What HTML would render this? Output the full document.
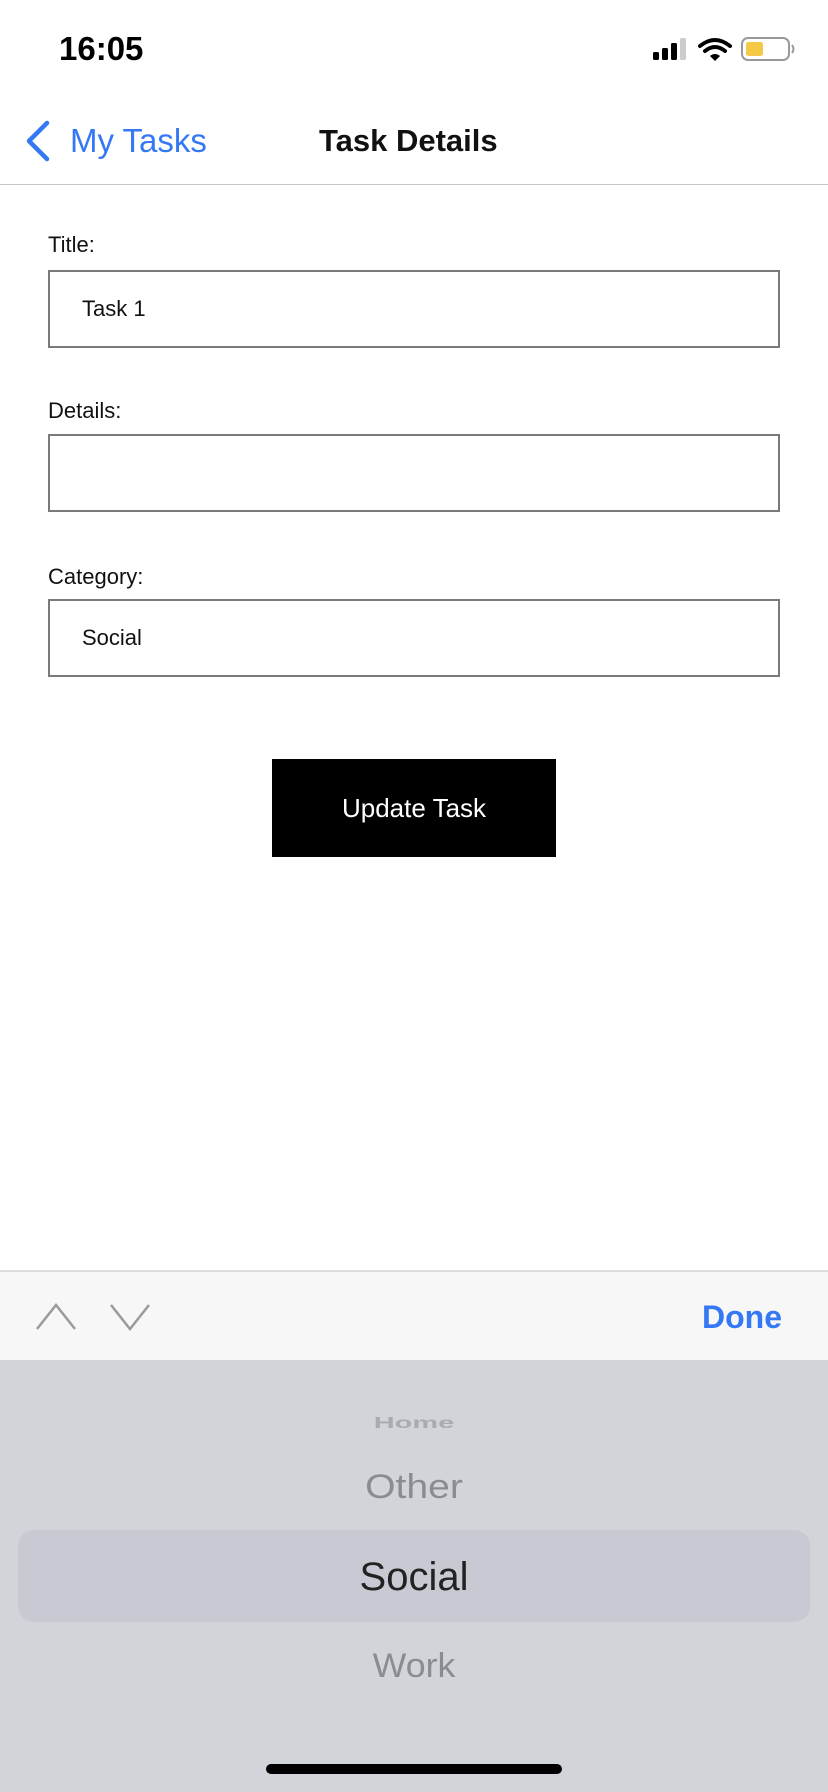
<!DOCTYPE html>
<html><head><meta charset="utf-8"><style>
*{margin:0;padding:0;box-sizing:border-box}
body{width:828px;height:1792px;position:relative;background:#fff;font-family:"Liberation Sans",sans-serif;overflow:hidden}
.a{position:absolute}
.lbl{position:absolute;left:48px;font-size:22px;color:#111;line-height:26px}
.inp{position:absolute;left:48px;width:732px;height:78px;border:2px solid #7a7a7a}
.inp span{position:absolute;left:32px;top:0;line-height:74px;font-size:22px;color:#111}
.pk{position:absolute;left:0;width:828px;text-align:center}
</style></head><body>
<div class="a" style="left:59px;top:29px;font-size:33px;font-weight:bold;line-height:40px;color:#000">16:05</div>
<svg class="a" style="left:650px;top:36px" width="150" height="30" viewBox="0 0 150 30">
<rect x="3" y="16" width="6" height="8" rx="1.5" fill="#000"/>
<rect x="12" y="12" width="6" height="12" rx="1.5" fill="#000"/>
<rect x="21" y="7" width="6" height="17" rx="1.5" fill="#000"/>
<rect x="30" y="2" width="6" height="22" rx="1.5" fill="#ccc"/>
<path d="M50 10 Q65 -2 80 10" stroke="#000" stroke-width="4" fill="none" stroke-linecap="round"/>
<path d="M55 15 Q65 7 75 15" stroke="#000" stroke-width="4" fill="none" stroke-linecap="round"/>
<path d="M60 20 L65 25 L70 20 Q65 16 60 20Z" fill="#000"/>
<rect x="92" y="2" width="47" height="22" rx="6" fill="none" stroke="#999" stroke-width="2"/>
<rect x="96" y="6" width="17" height="14" rx="2.5" fill="#f5c945"/>
<path d="M142 9 Q145 13 142 17" stroke="#999" stroke-width="2" fill="none"/>
</svg>
<svg class="a" style="left:22px;top:120px" width="32" height="42"><path d="M25 3 L7 21 L25 39" stroke="#3478f6" stroke-width="4.5" fill="none" stroke-linecap="round" stroke-linejoin="round"/></svg>
<div class="a" style="left:70px;top:120px;font-size:33px;color:#3478f6;line-height:42px">My Tasks</div>
<div class="a" style="left:319px;top:121px;font-size:31px;font-weight:bold;color:#111;line-height:40px">Task Details</div>
<div class="a" style="left:0;top:184px;width:828px;height:1px;background:#c5c5c5"></div>
<div class="lbl" style="top:232px">Title:</div>
<div class="inp" style="top:270px"><span>Task 1</span></div>
<div class="lbl" style="top:398px">Details:</div>
<div class="inp" style="top:434px"></div>
<div class="lbl" style="top:564px">Category:</div>
<div class="inp" style="top:599px"><span>Social</span></div>
<div class="a" style="left:272px;top:759px;width:284px;height:98px;background:#000;color:#fff;font-size:26px;text-align:center;line-height:98px">Update Task</div>
<div class="a" style="left:0;top:1270px;width:828px;height:90px;background:#f7f7f7;border-top:2px solid #dcdcdc"></div>
<svg class="a" style="left:34px;top:1300px" width="130" height="32"><path d="M3 29 L22 5 L41 29" stroke="#9a9a9a" stroke-width="2.5" fill="none"/><path d="M77 5 L96 29 L115 5" stroke="#9a9a9a" stroke-width="2.5" fill="none"/></svg>
<div class="a" style="left:702px;top:1297px;font-size:32px;font-weight:bold;color:#3478f6;line-height:40px">Done</div>
<div class="a" style="left:0;top:1360px;width:828px;height:432px;background:#d1d4d9"></div>
<div class="pk" style="top:1407px;font-size:29px;font-weight:bold;color:#a9abaf;line-height:32px;transform:scaleY(0.55)">Home</div>
<div class="pk" style="top:1466px;font-size:34px;color:#8a8c90;line-height:42px;transform:scaleX(1.15)">Other</div>
<div class="a" style="left:18px;top:1530px;width:792px;height:92px;border-radius:16px;background:#c7cad2"></div>
<div class="pk" style="top:1553px;font-size:40px;color:#222;line-height:48px">Social</div>
<div class="pk" style="top:1645px;font-size:34px;color:#8a8c90;line-height:42px;transform:scaleX(1.05)">Work</div>
<div class="a" style="left:266px;top:1764px;width:296px;height:10px;border-radius:5px;background:#000"></div>
</body></html>
